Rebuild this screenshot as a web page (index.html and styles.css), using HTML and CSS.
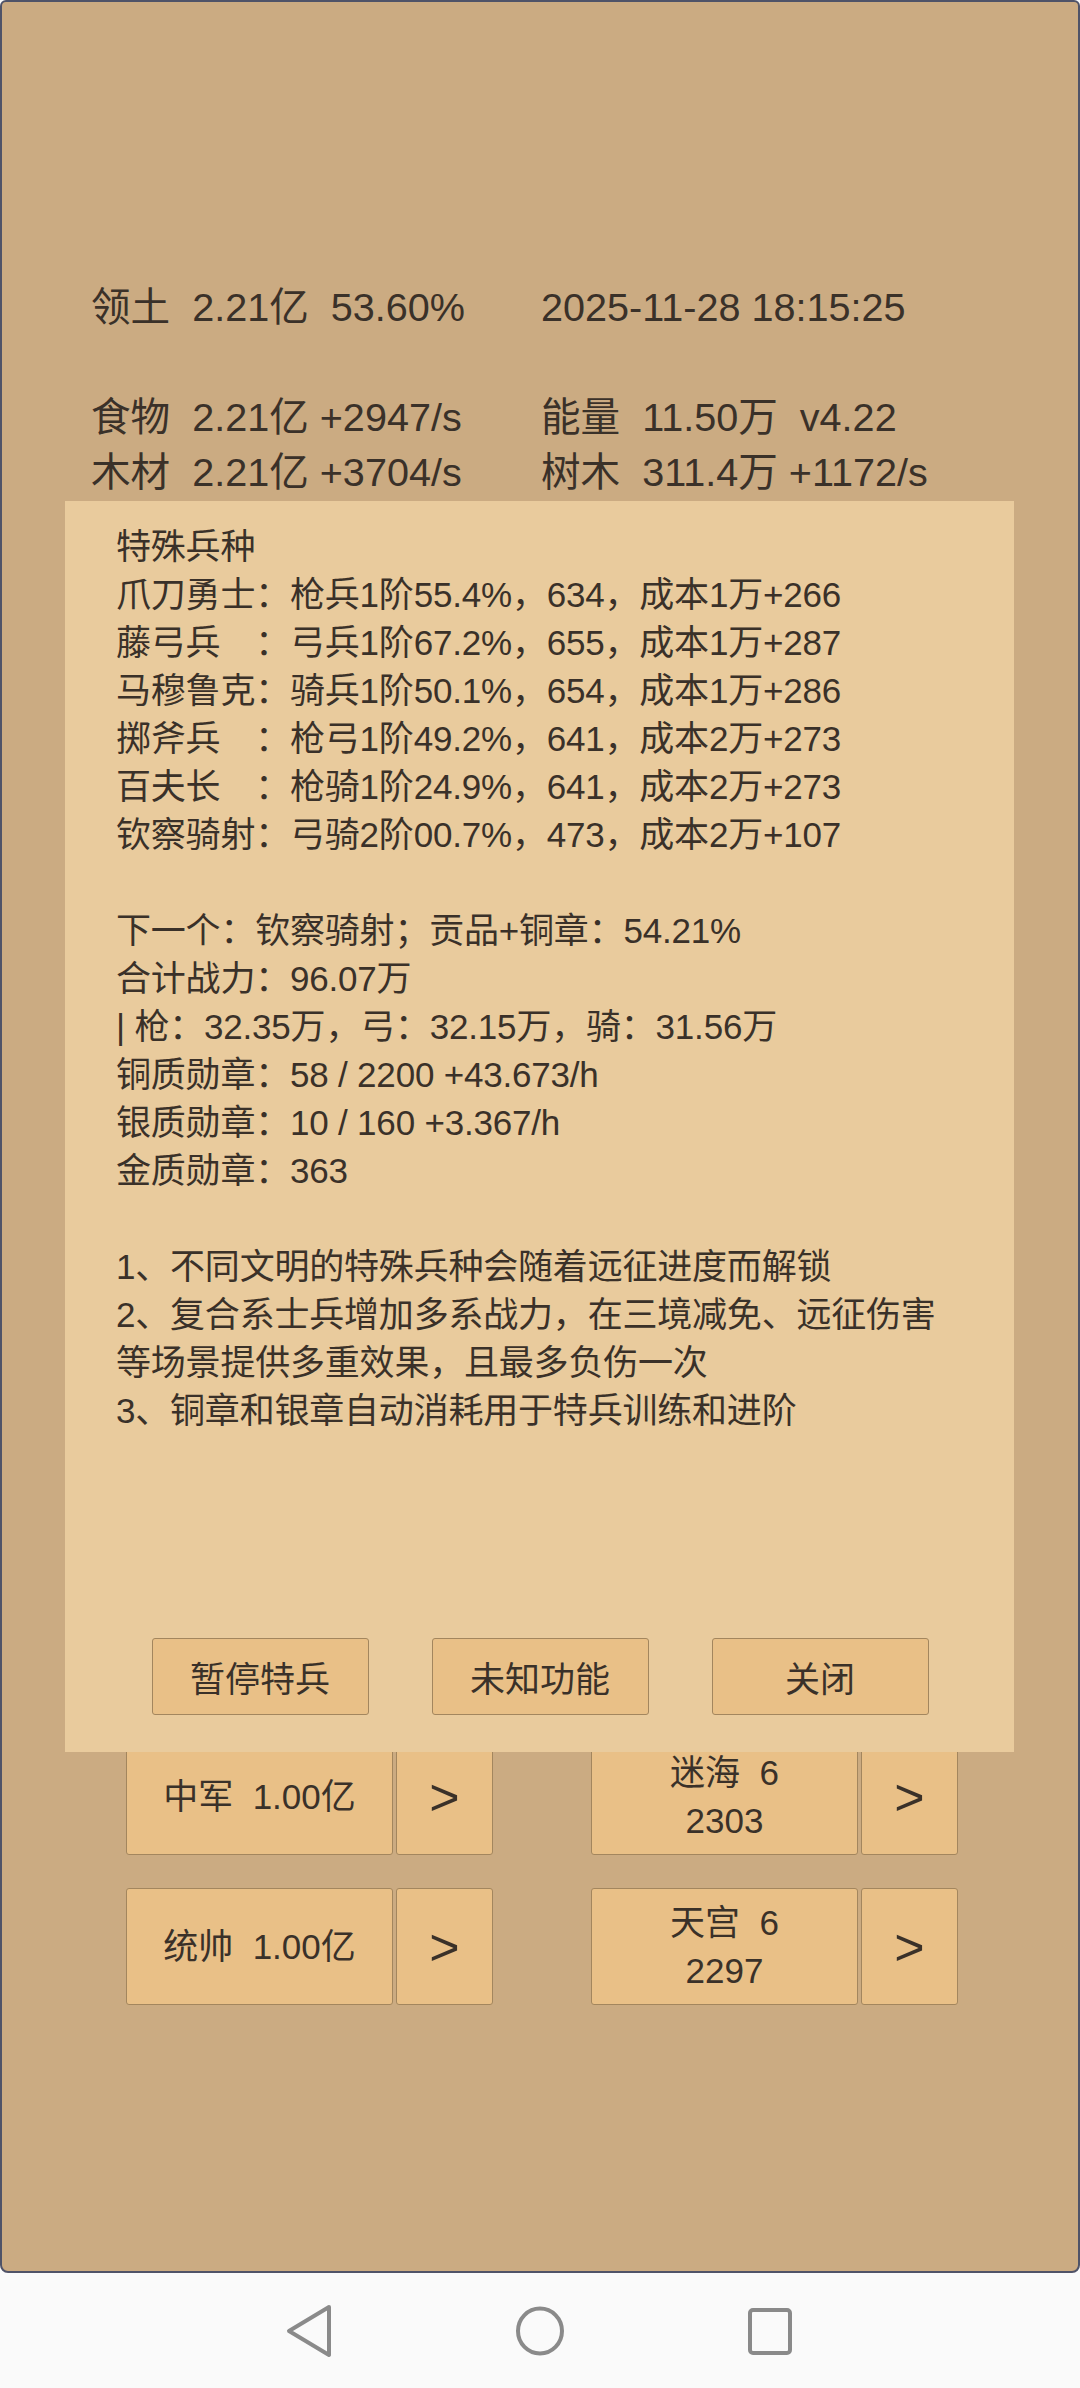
FILE: index.html
```html
<!DOCTYPE html>
<html lang="zh-CN">
<head>
<meta charset="utf-8">
<title>特殊兵种</title>
<link rel="stylesheet" href="styles.css">
</head>
<body>
<div class="screen">
  <div class="header">
    <div class="cell">领土  2.21亿  53.60%</div><div class="cell">2025-11-28 18:15:25</div>
    <div class="cell"> </div><div class="cell"> </div>
    <div class="cell">食物  2.21亿 +2947/s</div><div class="cell">能量  11.50万  v4.22</div>
    <div class="cell">木材  2.21亿 +3704/s</div><div class="cell">树木  311.4万 +1172/s</div>
  </div>

  <div class="grid">
    <div class="group">
      <div class="btn main">中军  1.00亿</div>
      <div class="btn arrow">&gt;</div>
    </div>
    <div class="group">
      <div class="btn main"><span>迷海  6</span><span>2303</span></div>
      <div class="btn arrow">&gt;</div>
    </div>
    <div class="group">
      <div class="btn main">统帅  1.00亿</div>
      <div class="btn arrow">&gt;</div>
    </div>
    <div class="group">
      <div class="btn main"><span>天宫  6</span><span>2297</span></div>
      <div class="btn arrow">&gt;</div>
    </div>
  </div>

  <div class="dialog">
    <div class="dtext"><div>特殊兵种</div><div>爪刀勇士：枪兵1阶55.4%，634，成本1万+266</div><div>藤弓兵　：弓兵1阶67.2%，655，成本1万+287</div><div>马穆鲁克：骑兵1阶50.1%，654，成本1万+286</div><div>掷斧兵　：枪弓1阶49.2%，641，成本2万+273</div><div>百夫长　：枪骑1阶24.9%，641，成本2万+273</div><div>钦察骑射：弓骑2阶00.7%，473，成本2万+107</div><div class="blank"> </div><div>下一个：钦察骑射；贡品+铜章：54.21%</div><div>合计战力：96.07万</div><div>| 枪：32.35万，弓：32.15万，骑：31.56万</div><div>铜质勋章：58 / 2200 +43.673/h</div><div>银质勋章：10 / 160 +3.367/h</div><div>金质勋章：363</div><div class="blank"> </div><div>1、不同文明的特殊兵种会随着远征进度而解锁</div><div>2、复合系士兵增加多系战力，在三境减免、远征伤害等场景提供多重效果，且最多负伤一次</div><div>3、铜章和银章自动消耗用于特兵训练和进阶</div></div>
    <div class="dbtns">
      <div class="dbtn">暂停特兵</div>
      <div class="dbtn">未知功能</div>
      <div class="dbtn">关闭</div>
    </div>
  </div>
</div>
<div class="navbar">
  <svg class="navicon" viewBox="0 0 60 60" width="60" height="60"><path d="M49 6 L9 30 L49 54 Z" fill="none" stroke="#8a8a8a" stroke-width="4" stroke-linejoin="round"/></svg>
  <svg class="navicon" viewBox="0 0 60 60" width="60" height="60"><ellipse cx="30" cy="30" rx="22" ry="22.5" fill="none" stroke="#8a8a8a" stroke-width="4"/></svg>
  <svg class="navicon" viewBox="0 0 60 60" width="60" height="60"><rect x="10" y="9" width="40" height="43" rx="3" fill="none" stroke="#8a8a8a" stroke-width="4"/></svg>
</div>
</body>
</html>
```
FILE: styles.css
```css
html, body {
  margin: 0;
  padding: 0;
}
body {
  width: 1080px;
  height: 2388px;
  background: #fafafa;
  font-family: "Liberation Sans", "Noto Sans CJK SC", sans-serif;
  color: #3a3129;
  overflow: hidden;
}
.screen {
  position: relative;
  box-sizing: border-box;
  width: 1080px;
  height: 2273px;
  background: #cbab82;
  border: 2px solid #4f5368;
  border-radius: 6px 6px 8px 8px;
}
.header {
  display: grid;
  grid-template-columns: 450px auto;
  padding: 278px 0 0 89px;
  font-size: 39.6px;
  line-height: 55px;
}
.cell {
  white-space: pre;
  height: 55px;
}
.grid {
  display: grid;
  grid-template-columns: 367px 367px;
  column-gap: 98px;
  row-gap: 33px;
  margin-top: 1238px;
  padding-left: 124px;
}
.group {
  display: flex;
  gap: 3px;
  height: 117px;
}
.btn {
  box-sizing: border-box;
  background: #e9c087;
  border: 1px solid #a3865e;
  border-radius: 3px;
  display: flex;
  align-items: center;
  justify-content: center;
}
.main {
  width: 267px;
  flex-direction: column;
  font-size: 35px;
  line-height: 48px;
  white-space: pre;
}
.arrow {
  width: 97px;
  font-size: 52px;
}
.dialog {
  position: absolute;
  left: 63px;
  top: 499px;
  width: 949px;
  height: 1251px;
  box-sizing: border-box;
  background: #e9cb9d;
  display: flex;
  flex-direction: column;
  padding: 22px 50px 37px 51px;
}
.dtext {
  font-size: 35px;
  line-height: 48px;
  letter-spacing: -0.2px;
}
.dtext > div {
  white-space: pre-wrap;
}
.blank {
  height: 48px;
}
.dbtns {
  margin-top: auto;
  display: flex;
  justify-content: center;
  gap: 63px;
}
.dbtn {
  box-sizing: border-box;
  width: 217px;
  height: 77px;
  background: #e9c087;
  border: 1px solid #a3865e;
  border-radius: 3px;
  display: flex;
  align-items: center;
  justify-content: center;
  font-size: 35px;
}
.navbar {
  height: 115px;
  display: flex;
  align-items: center;
  justify-content: center;
  gap: 170px;
  background: #fafafa;
}
.navicon {
  display: block;
}
```
